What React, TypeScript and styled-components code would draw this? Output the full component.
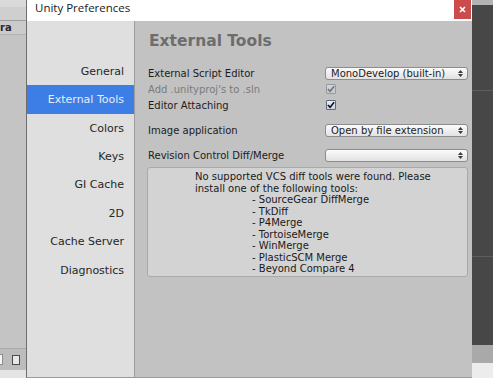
import React from "react";
import styled, { createGlobalStyle } from "styled-components";

const Global = createGlobalStyle`
  html, body { margin: 0; padding: 0; background: #c4c4c4; }
  body { font-family: "DejaVu Sans", Verdana, sans-serif; }
  * { box-sizing: border-box; }
`;

const Screen = styled.div`
  width: 493px;
  height: 378px;
  display: flex;
  overflow: hidden;
`;

/* ---------- background editor pieces ---------- */
const LeftBg = styled.div`
  width: 26px;
  display: flex;
  flex-direction: column;
  background: #c5c5c5;
`;

const Strip = styled.div<{ $h: number; $bg: string; $border?: string }>`
  height: ${(p) => p.$h}px;
  flex: none;
  background: ${(p) => p.$bg};
  ${(p) => (p.$border ? `border-bottom: 1px solid ${p.$border};` : "")}
`;

const Filler = styled.div<{ $bg: string }>`
  flex: 1;
  background: ${(p) => p.$bg};
`;

const TabLabel = styled.div`
  height: 14px;
  flex: none;
  background: #cbcbcb;
  font: bold 10px "DejaVu Sans", sans-serif;
  color: #2a2a2a;
  line-height: 14px;
  padding-left: 0;
  border-bottom: 1px solid #b3b3b3;
`;

const LeftToolbar = styled.div`
  height: 22px;
  flex: none;
  background: #bcbcbc;
  display: flex;
  align-items: center;
  gap: 9px;
  border-top: 1px solid #aaaaaa;
`;

const WhiteField = styled.div`
  width: 3px;
  height: 11px;
  background: #f4f4f4;
  border: 1px solid #8d8d8d;
  border-left: none;
`;

const TinyIcon = styled.div`
  width: 8px;
  height: 10px;
  border: 1px solid #4a4a4a;
  background: #e8e8e8;
`;

const RightBg = styled.div`
  width: 21px;
  display: flex;
  flex-direction: column;
  background: #474747;
`;

/* ---------- dialog ---------- */
const Dialog = styled.div`
  width: 446px;
  display: flex;
  flex-direction: column;
  border-left: 1px solid #6e6e6e;
  border-bottom: 1px solid #9a9a9a;
`;

const TitleBar = styled.div`
  height: 21px;
  flex: none;
  background: #ffffff;
  display: flex;
  align-items: flex-start;
  justify-content: space-between;
`;

const Title = styled.div`
  font-family: "Segoe UI", "Open Sans", sans-serif;
  font-size: 11.5px;
  color: #1a1a1a;
  padding-left: 8px;
  line-height: 15px;
`;

const CloseButton = styled.div`
  width: 17px;
  height: 19px;
  margin-right: 1px;
  background: #cc4b4b;
  color: #ffffff;
  display: flex;
  align-items: center;
  justify-content: center;
`;

const Body = styled.div`
  flex: 1;
  display: flex;
  min-height: 0;
`;

const Sidebar = styled.div`
  width: 108px;
  flex: none;
  background: #dfdfdf;
  border-right: 1px solid #9c9c9c;
  padding-top: 36px;
  display: flex;
  flex-direction: column;
`;

const NavItem = styled.div<{ $active?: boolean }>`
  height: 28.43px;
  display: flex;
  align-items: center;
  justify-content: flex-end;
  padding-right: 10px;
  font-size: 11px;
  color: ${(p) => (p.$active ? "#e6ecf8" : "#262626")};
  background: ${(p) => (p.$active ? "#3d7ee6" : "transparent")};
`;

const Content = styled.div`
  flex: 1;
  background: #c2c2c2;
  padding-left: 12px;
  display: flex;
  flex-direction: column;
`;

const Heading = styled.div`
  margin-top: 10px;
  margin-left: 2px;
  height: 20px;
  line-height: 20px;
  font-size: 15.5px;
  font-weight: bold;
  color: #6d6d6d;
  margin-bottom: 14px;
`;

const Row = styled.div<{ $mt?: number }>`
  display: grid;
  grid-template-columns: 178px 143px;
  align-items: center;
  height: 16px;
  margin-top: ${(p) => p.$mt ?? 0}px;
`;

const Label = styled.div<{ $disabled?: boolean }>`
  padding-left: 1px;
  font-size: 10px;
  color: ${(p) => (p.$disabled ? "#7b7b7b" : "#1c1c1c")};
  white-space: nowrap;
`;

const Dropdown = styled.div`
  height: 13px;
  border: 1px solid #8c8c8c;
  border-radius: 3px;
  background: linear-gradient(#fbfbfb, #e2e2e2);
  display: flex;
  align-items: center;
  justify-content: space-between;
  padding: 0 4px 0 5px;
  font-size: 10px;
  color: #1c1c1c;
  line-height: 11px;
`;

const Check = styled.div<{ $disabled?: boolean }>`
  width: 10px;
  height: 10px;
  margin-left: 1px;
  border: 1px solid #5e6a7c;
  border-radius: 1px;
  background: linear-gradient(#e9eef6, #c9d4e3);
  display: flex;
  align-items: center;
  justify-content: center;
  opacity: ${(p) => (p.$disabled ? 0.45 : 1)};
`;

const HelpBox = styled.div`
  margin-top: 4px;
  width: 321px;
  height: 110px;
  border: 1px solid #a9a9a9;
  border-radius: 3px;
  background: #d3d3d3;
  padding: 3px 0 0 47px;
  font-size: 10px;
  line-height: 11.5px;
  color: #1a1a1a;
  white-space: nowrap;
`;

const HelpLine = styled.div<{ $indent?: boolean }>`
  padding-left: ${(p) => (p.$indent ? 57 : 0)}px;
`;

const Arrows = () => (
  <svg width="5" height="7" viewBox="0 0 5 7">
    <path d="M2.5 0 L5 3 H0 Z M0 4 H5 L2.5 7 Z" fill="#3a3a3a" />
  </svg>
);

const CheckMark = () => (
  <svg width="9" height="8" viewBox="0 0 9 8">
    <path d="M1 4 L3.5 6.5 L8 1" stroke="#111" strokeWidth="1.8" fill="none" />
  </svg>
);

const navItems = [
  "General",
  "External Tools",
  "Colors",
  "Keys",
  "GI Cache",
  "2D",
  "Cache Server",
  "Diagnostics",
];

const tools = [
  "SourceGear DiffMerge",
  "TkDiff",
  "P4Merge",
  "TortoiseMerge",
  "WinMerge",
  "PlasticSCM Merge",
  "Beyond Compare 4",
];

export default function App() {
  return (
    <>
      <Global />
      <Screen>
        <LeftBg>
          <Strip $h={7} $bg="#dadada" />
          <Strip $h={14} $bg="#cfcfcf" $border="#9d9d9d" />
          <TabLabel>ra</TabLabel>
          <Filler $bg="#c4c4c4" />
          <LeftToolbar>
            <WhiteField />
            <TinyIcon />
          </LeftToolbar>
          <Strip $h={8} $bg="#e4e4e4" />
        </LeftBg>

        <Dialog>
          <TitleBar>
            <Title>Unity Preferences</Title>
            <CloseButton>
              <svg width="7" height="7" viewBox="0 0 7 7">
                <path d="M1 1 L6 6 M6 1 L1 6" stroke="#fff" strokeWidth="1.6" />
              </svg>
            </CloseButton>
          </TitleBar>
          <Body>
            <Sidebar>
              {navItems.map((n) => (
                <NavItem key={n} $active={n === "External Tools"}>
                  {n}
                </NavItem>
              ))}
            </Sidebar>
            <Content>
              <Heading>External Tools</Heading>
              <Row>
                <Label>External Script Editor</Label>
                <Dropdown>
                  <span>MonoDevelop (built-in)</span>
                  <Arrows />
                </Dropdown>
              </Row>
              <Row>
                <Label $disabled>Add .unityproj's to .sln</Label>
                <Check $disabled>
                  <CheckMark />
                </Check>
              </Row>
              <Row>
                <Label>Editor Attaching</Label>
                <Check>
                  <CheckMark />
                </Check>
              </Row>
              <Row $mt={9}>
                <Label>Image application</Label>
                <Dropdown>
                  <span>Open by file extension</span>
                  <Arrows />
                </Dropdown>
              </Row>
              <Row $mt={9}>
                <Label>Revision Control Diff/Merge</Label>
                <Dropdown>
                  <span />
                  <Arrows />
                </Dropdown>
              </Row>
              <HelpBox>
                <HelpLine>No supported VCS diff tools were found. Please</HelpLine>
                <HelpLine>install one of the following tools:</HelpLine>
                {tools.map((t) => (
                  <HelpLine key={t} $indent>
                    - {t}
                  </HelpLine>
                ))}
              </HelpBox>
            </Content>
          </Body>
        </Dialog>

        <RightBg>
          <Strip $h={5} $bg="#b3b3b3" />
          <Strip $h={86} $bg="#474747" $border="#5c5c5c" />
          <Strip $h={166} $bg="#474747" $border="#5c5c5c" />
          <Filler $bg="#474747" />
          <Strip $h={18} $bg="#a9a9a9" />
          <Strip $h={15} $bg="#ececec" />
        </RightBg>
      </Screen>
    </>
  );
}
